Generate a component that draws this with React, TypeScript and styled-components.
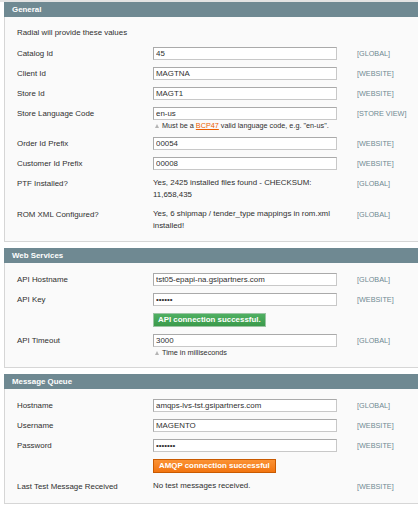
import React from "react";
import styled, { createGlobalStyle, css } from "styled-components";

const GlobalStyle = createGlobalStyle`
  html, body {
    margin: 0;
    padding: 0;
    background: #ffffff;
  }
  body {
    font-family: "Liberation Sans", Arial, sans-serif;
    font-size: 7.9px;
    color: #2f2f2f;
  }
  * { box-sizing: border-box; }
`;

const Page = styled.div`
  width: 418px;
  overflow: hidden;
  padding: 2px 0 0 4px;
  background: linear-gradient(#e3e3e3, #e3e3e3) top left / 100% 2px no-repeat, #ffffff;
`;

const Section = styled.section`
  width: 420px;
  margin-bottom: 6px;
`;

const SectionHeader = styled.div`
  height: 15px;
  line-height: 15px;
  background: #6f8992;
  color: #ffffff;
  font-weight: bold;
  padding-left: 8px;
`;

const SectionBody = styled.div<{ $bottom?: number }>`
  background: #fafafa;
  border: 1px solid #d6d6d6;
  border-top: 0;
  padding: 10px 0 ${(p) => p.$bottom ?? 10}px 12px;
  display: flex;
  flex-direction: column;
  gap: 7px;
`;

const Intro = styled.div`
  line-height: 12px;
  margin-bottom: 1px;
`;

const Row = styled.div`
  display: grid;
  grid-template-columns: 136px 184px auto;
  align-items: start;
`;

const Label = styled.div`
  line-height: 13px;
  white-space: nowrap;
`;

const ValueCell = styled.div`
  display: flex;
  flex-direction: column;
`;

const ValueText = styled.div`
  line-height: 12px;
`;

const TextInput = styled.input`
  width: 184px;
  height: 13px;
  margin: 0;
  padding: 0 2px;
  border: 1px solid;
  border-color: #aaaaaa #c8c8c8 #c8c8c8 #aaaaaa;
  background: #ffffff;
  font-family: "Liberation Sans", Arial, sans-serif;
  font-size: 7.9px;
  color: #2f2f2f;
  outline: none;
`;

const Scope = styled.div`
  padding-left: 20px;
  color: #6f8992;
  font-size: 7.26px;
  line-height: 13px;
  white-space: nowrap;
`;

const Hint = styled.div`
  margin-top: 1px;
  font-size: 7.26px;
  line-height: 9px;
  white-space: nowrap;
  display: flex;
  align-items: center;
  &::before {
    content: "";
    display: inline-block;
    width: 0;
    height: 0;
    margin: 0 3px 0 2px;
    border-left: 2.5px solid transparent;
    border-right: 2.5px solid transparent;
    border-bottom: 4px solid #b4b4b4;
  }
`;

const HintLink = styled.a`
  color: #eb5e00;
  text-decoration: underline;
  margin: 0 2px;
`;

const StatusButton = styled.button<{ $variant: "success" | "warning" }>`
  align-self: flex-start;
  height: 14px;
  margin: 0;
  padding: 0 4px;
  font-family: "Liberation Sans", Arial, sans-serif;
  font-size: 7.9px;
  font-weight: bold;
  line-height: 12px;
  color: #ffffff;
  white-space: nowrap;
  cursor: pointer;
  ${(p) =>
    p.$variant === "success"
      ? css`
          background: linear-gradient(#4fb062, #3b9a4b);
          border: 1px solid #9cc4a4;
        `
      : css`
          background: linear-gradient(#fb9234, #f27510);
          border: 1px solid #c95a00;
          padding: 0 5px;
        `}
`;

type FieldRow =
  | { kind: "input"; label: string; value: string; scope: string; password?: boolean; hint?: React.ReactNode }
  | { kind: "text"; label: string; value: string; scope: string }
  | { kind: "button"; text: string; variant: "success" | "warning" };

const FieldRows: React.FC<{ rows: FieldRow[] }> = ({ rows }) => (
  <>
    {rows.map((r, i) => {
      if (r.kind === "button") {
        return (
          <Row key={i}>
            <Label />
            <ValueCell>
              <StatusButton $variant={r.variant}>{r.text}</StatusButton>
            </ValueCell>
            <Scope />
          </Row>
        );
      }
      if (r.kind === "text") {
        return (
          <Row key={i}>
            <Label>{r.label}</Label>
            <ValueCell>
              <ValueText>{r.value}</ValueText>
            </ValueCell>
            <Scope>{r.scope}</Scope>
          </Row>
        );
      }
      return (
        <Row key={i}>
          <Label>{r.label}</Label>
          <ValueCell>
            <TextInput type={r.password ? "password" : "text"} defaultValue={r.value} readOnly />
            {r.hint && <Hint>{r.hint}</Hint>}
          </ValueCell>
          <Scope>{r.scope}</Scope>
        </Row>
      );
    })}
  </>
);

const generalRows: FieldRow[] = [
  { kind: "input", label: "Catalog Id", value: "45", scope: "[GLOBAL]" },
  { kind: "input", label: "Client Id", value: "MAGTNA", scope: "[WEBSITE]" },
  { kind: "input", label: "Store Id", value: "MAGT1", scope: "[WEBSITE]" },
  {
    kind: "input",
    label: "Store Language Code",
    value: "en-us",
    scope: "[STORE VIEW]",
    hint: (
      <span>
        Must be a<HintLink href="#">BCP47</HintLink>valid language code, e.g. "en-us".
      </span>
    ),
  },
  { kind: "input", label: "Order Id Prefix", value: "00054", scope: "[WEBSITE]" },
  { kind: "input", label: "Customer Id Prefix", value: "00008", scope: "[WEBSITE]" },
  {
    kind: "text",
    label: "PTF Installed?",
    value: "Yes, 2425 installed files found - CHECKSUM: 11,658,435",
    scope: "[GLOBAL]",
  },
  {
    kind: "text",
    label: "ROM XML Configured?",
    value: "Yes, 6 shipmap / tender_type mappings in rom.xml installed!",
    scope: "[GLOBAL]",
  },
];

const webRows: FieldRow[] = [
  { kind: "input", label: "API Hostname", value: "tst05-epapi-na.gsipartners.com", scope: "[GLOBAL]" },
  { kind: "input", label: "API Key", value: "123456", scope: "[WEBSITE]", password: true },
  { kind: "button", text: "API connection successful.", variant: "success" },
  {
    kind: "input",
    label: "API Timeout",
    value: "3000",
    scope: "[GLOBAL]",
    hint: <span>Time in milliseconds</span>,
  },
];

const mqRows: FieldRow[] = [
  { kind: "input", label: "Hostname", value: "amqps-lvs-tst.gsipartners.com", scope: "[GLOBAL]" },
  { kind: "input", label: "Username", value: "MAGENTO", scope: "[WEBSITE]" },
  { kind: "input", label: "Password", value: "1234567", scope: "[WEBSITE]", password: true },
  { kind: "button", text: "AMQP connection successful", variant: "warning" },
  { kind: "text", label: "Last Test Message Received", value: "No test messages received.", scope: "[WEBSITE]" },
];

export default function App() {
  return (
    <>
      <GlobalStyle />
      <Page>
        <Section>
          <SectionHeader>General</SectionHeader>
          <SectionBody $bottom={9}>
            <Intro>Radial will provide these values</Intro>
            <FieldRows rows={generalRows} />
          </SectionBody>
        </Section>
        <Section>
          <SectionHeader>Web Services</SectionHeader>
          <SectionBody>
            <FieldRows rows={webRows} />
          </SectionBody>
        </Section>
        <Section>
          <SectionHeader>Message Queue</SectionHeader>
          <SectionBody>
            <FieldRows rows={mqRows} />
          </SectionBody>
        </Section>
      </Page>
    </>
  );
}
